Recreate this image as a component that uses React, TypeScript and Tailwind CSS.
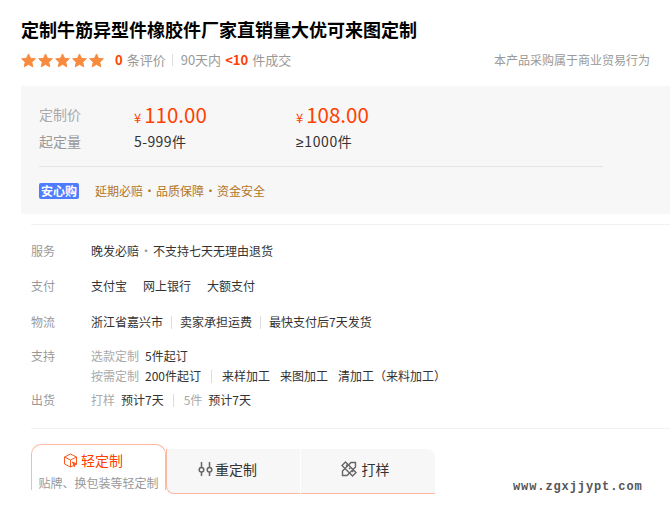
import type { ReactNode } from 'react';

const FONT = "font-['Noto_Sans_CJK_SC','Noto_Sans',sans-serif]";

function Star() {
  return (
    <svg width="15" height="15" viewBox="0 0 24 23" className="shrink-0">
      <path
        d="M12 1l3.200 7 7.800.8-5.800 5.200 1.700 7.600L12 17.700 5.100 21.600l1.700-7.600L1 8.800 8.800 8z"
        fill="#f98b3f"
        stroke="#f98b3f"
        strokeWidth="1.500"
        strokeLinejoin="round"
      />
    </svg>
  );
}

function Row({ label, className, children }: { label: string; className: string; children: ReactNode }) {
  return (
    <div className={`flex text-xs leading-[20px] ${className}`}>
      <span className="w-[60px] shrink-0 text-[#999]">{label}</span>
      <div className="text-[#333]">{children}</div>
    </div>
  );
}

const Sep = () => <span className="mx-[8px] inline-block h-[13px] w-px bg-[#ddd] align-[-2px]" />;

export default function App() {
  return (
    <div className={`relative h-[508px] w-[670px] overflow-hidden bg-white ${FONT}`}>
      <h1 className="pl-[21px] pt-[17px] text-[18px] font-bold leading-[24px] text-black">
        定制牛筋异型件橡胶件厂家直销量大优可来图定制
      </h1>

      <div className="mt-[7px] flex h-[24px] items-center pl-[21px] text-[13px]">
        <div className="flex gap-[2px]">
          <Star />
          <Star />
          <Star />
          <Star />
          <Star />
        </div>
        <span className="ml-[11px] font-bold text-[#ff4000]">0</span>
        <span className="ml-[4px] text-[#999]">条评价</span>
        <span className="mx-[6px] h-[12px] w-px bg-[#ddd]" />
        <span className="ml-[2px] text-[#999]">90天内</span>
        <span className="ml-[4px] font-bold text-[#ff4000]">&lt;10</span>
        <span className="ml-[4px] text-[#999]">件成交</span>
        <span className="ml-auto pr-[20px] text-xs text-[#999]">本产品采购属于商业贸易行为</span>
      </div>

      <div className="ml-[21px] mt-[14px] h-[128px] bg-[#f7f7f7] pl-[18px] pt-[14px]">
        <div className="flex h-[28px] items-center">
          <span className="w-[95px] text-sm text-[#aaa]">定制价</span>
          <div className="flex w-[162px] items-baseline text-[#ff4000]">
            <span className="mr-[3px] text-[13px]">¥</span>
            <span className="text-[20.5px]">110.00</span>
          </div>
          <div className="flex items-baseline text-[#ff4000]">
            <span className="mr-[3px] text-[13px]">¥</span>
            <span className="text-[20.5px]">108.00</span>
          </div>
        </div>
        <div className="flex h-[26px] items-center">
          <span className="w-[95px] text-sm text-[#999]">起定量</span>
          <span className="w-[162px] text-sm tracking-[0.4px] text-[#333]">5-999件</span>
          <span className="text-sm tracking-[0.6px] text-[#333]">
            <span className="font-['Liberation_Sans',sans-serif]">≥</span>1000件
          </span>
        </div>
        <div className="mr-[67px] mt-[12px] border-t border-[#e5e5e5]" />
        <div className="mt-[15px] flex h-[18px] items-center">
          <span className="flex h-[16px] w-[40px] items-center justify-center rounded-[2px] bg-[#4d7cfe] text-[12px] font-bold text-white">
            安心购
          </span>
          <div className="ml-[16px] flex text-xs text-[#b37424]">
            <span>延期必赔</span>
            <span className="w-[13px] text-center">·</span>
            <span>品质保障</span>
            <span className="w-[13px] text-center">·</span>
            <span>资金安全</span>
          </div>
        </div>
      </div>

      <div className="ml-[31px] mt-[10px] border-t border-[#f2f2f2]" />

      <div className="pl-[31px]">
        <Row label="服务" className="mt-[16px]">
          <div className="flex">
            <span>晚发必赔</span>
            <span className="w-[14px] text-center text-[#999]">·</span>
            <span>不支持七天无理由退货</span>
          </div>
        </Row>
        <Row label="支付" className="mt-[15px]">
          <div className="flex gap-[16px]">
            <span>支付宝</span>
            <span>网上银行</span>
            <span>大额支付</span>
          </div>
        </Row>
        <Row label="物流" className="mt-[16px]">
          浙江省嘉兴市
          <Sep />
          卖家承担运费
          <Sep />
          最快支付后7天发货
        </Row>
        <Row label="支持" className="mt-[14px]">
          <div>
            <span className="mr-[6px] text-[#aaa]">选款定制</span>5件起订
          </div>
          <div>
            <span className="mr-[6px] text-[#aaa]">按需定制</span>200件起订
            <span className="mx-[10px] inline-block h-[13px] w-px bg-[#ddd] align-[-2px]" />
            <span className="mr-[10px]">来样加工</span>
            <span className="mr-[10px]">来图加工</span>
            清加工（来料加工）
          </div>
        </Row>
        <Row label="出货" className="mt-[4px]">
          <span className="mr-[6px] text-[#aaa]">打样</span>预计7天
          <span className="mx-[9px] inline-block h-[13px] w-px bg-[#ddd] align-[-2px]" />
          <span className="ml-px mr-[6px] text-[#aaa]">5件</span>预计7天
        </Row>
      </div>

      <div className="ml-[31px] mt-[18px] border-t border-[#f2f2f2]" />

      <div className="ml-[31px] mt-[15px] flex items-start">
        <div className="z-10 h-[46px] w-[135px] overflow-hidden rounded-t-[10px] border border-b-0 border-[#ffb8a0] bg-white text-center">
          <div className="mt-[5px] flex items-center justify-center gap-[3px] pr-[11px] text-sm leading-[20px] text-[#ff4000]">
            <svg width="15" height="15" viewBox="0 0 15 15" fill="none" stroke="#ff5a1f" strokeWidth="1">
              <path d="M7.500 1l6 3v7l-6 3-6-3V4z" />
              <path d="M1.500 4l6 3 6-3M7.500 7v7" />
              <path d="M9.500 9l4.500 2-2 .6-.6 2.400z" fill="#ff5a1f" />
            </svg>
            轻定制
          </div>
          <div className="mt-[3px] text-xs leading-[20px] text-[#999]">贴牌、换包装等轻定制</div>
        </div>
        <div className="mt-[5px] flex h-[45px] w-[134px] items-center justify-center gap-[2px] rounded-bl-[8px] border-b border-l border-[#ffb8a0] bg-[#f7f7f7] pb-[4px] pr-[12px] text-sm text-[#333]">
          <svg width="15" height="16" viewBox="0 0 15 16" fill="none" stroke="#666" strokeWidth="1.500">
            <path d="M3.500 1v5.500M3.500 11v4M11.500 1v5.500M11.500 11v4" />
            <circle cx="3.500" cy="8.800" r="2.300" />
            <circle cx="11.500" cy="8.800" r="2.300" />
          </svg>
          重定制
        </div>
        <div className="ml-px mt-[5px] flex h-[45px] w-[134px] items-center justify-center gap-[5px] rounded-tr-[8px] border-b border-[#ffb8a0] bg-[#f7f7f7] pb-[4px] pr-[6px] text-sm text-[#333]">
          <svg width="16" height="16" viewBox="0 0 16 16" fill="none" stroke="#666" strokeWidth="1.400">
            <path d="M1 4.500L4.500 1 15 11.500 11.500 15z" />
            <path d="M5 5l1.500-1.500M8 8l1.500-1.500M11 11l1.500-1.500" />
            <path d="M10 1.500h4.500V6L6 14.500H1.500V10z" />
          </svg>
          打样
        </div>
      </div>

      <span className="absolute left-[513px] top-[478px] font-['Liberation_Mono',monospace] text-[12px] font-bold tracking-[0.9px] text-[#555]">
        www.zgxjjypt.com
      </span>
    </div>
  );
}
